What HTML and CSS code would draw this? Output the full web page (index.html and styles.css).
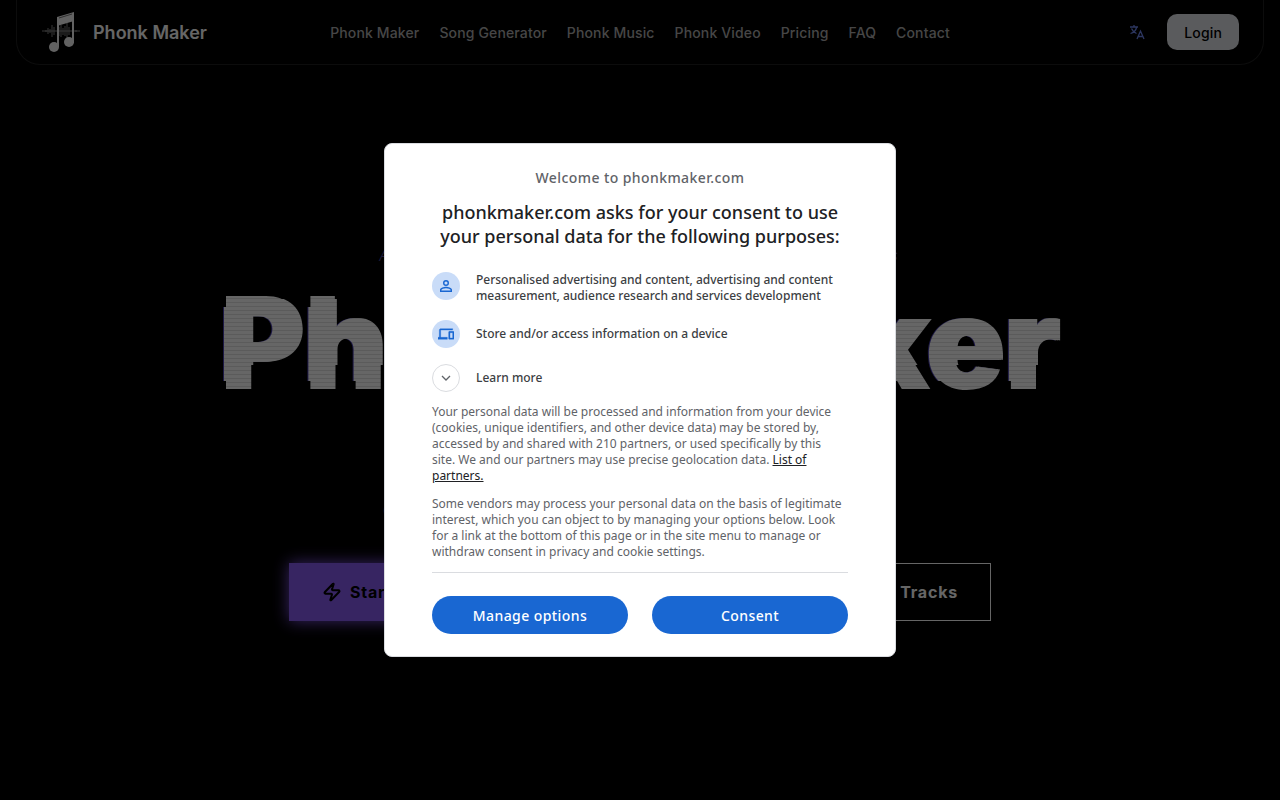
FILE: index.html
```html
<!DOCTYPE html>
<html lang="en">
<head>
  <meta charset="UTF-8" />
  <meta name="viewport" content="width=device-width, initial-scale=1" />
  <title>Phonk Maker</title>
  <link rel="stylesheet" href="styles.css">
</head>
<body>

  <header class="navbar">
    <a class="brand" href="#">
      <svg class="brand-logo" viewBox="0 0 40 44" aria-hidden="true">
        <path d="M1 21h38M5 20v2M7 18v6M9 19v4M11 15v12M13 17v8M18 17v9M20 15v12M22 18v7M24 16v10M26 13v16M28 17v8M35 20v2" stroke="#888" stroke-width="1" fill="none" />
        <path d="M17 9v28M32 4v29" stroke="#f4f4f4" stroke-width="2" fill="none" />
        <path d="M16 7 33 2v9l-17 5z" fill="#f4f4f4" />
        <path d="M18 8 31 4" stroke="#777" stroke-width="1" />
        <ellipse cx="13" cy="37" rx="5" ry="5" fill="#f4f4f4" />
        <ellipse cx="28" cy="32" rx="5" ry="5" fill="#f4f4f4" />
      </svg>
      <span>Phonk Maker</span>
    </a>
    <nav class="nav-links">
      <a href="#">Phonk Maker</a>
      <a href="#">Song Generator</a>
      <a href="#">Phonk Music</a>
      <a href="#">Phonk Video</a>
      <a href="#">Pricing</a>
      <a href="#">FAQ</a>
      <a href="#">Contact</a>
    </nav>
    <div class="nav-right">
      <button class="lang-btn" type="button" aria-label="Language">
        <svg width="16" height="16" viewBox="0 0 16 16" fill="none" stroke="currentColor" stroke-width="1.3">
          <path d="M1 3h8M5 1v2M2.500 4.500c1 2.500 3 4 5 5M7.500 3.500c-.5 2.500-2.500 5-6 6M8 15l3.500-8 3.500 8M9.500 12.500h4" />
        </svg>
      </button>
      <button class="login-btn" type="button">Login</button>
    </div>
  </header>

  <main class="hero">
    <p class="hero-tag">AI Phonk Music Generator for Free Online Studios</p>
    <h1 class="glitch" data-text="Phonk Maker">Phonk Maker</h1>
    <p class="hero-text">Create phonk music from text in seconds and share your tracks.</p>
    <div class="hero-actions">
      <button class="btn btn-primary" type="button">
        <svg width="20" height="20" viewBox="0 0 24 24" fill="none" stroke="currentColor" stroke-width="2.400" stroke-linecap="round" stroke-linejoin="round" aria-hidden="true">
          <path d="M4 14a1 1 0 0 1-.78-1.630l9.900-10.200a.5.5 0 0 1 .86.460l-1.920 6.020A1 1 0 0 0 13 10h7a1 1 0 0 1 .78 1.630l-9.900 10.200a.5.5 0 0 1-.86-.460l1.920-6.020A1 1 0 0 0 11 14z" />
        </svg>
        Start Creating Music Now
      </button>
      <button class="btn btn-outline" type="button">Explore All Tracks</button>
    </div>
  </main>

  <div class="overlay">
    <div class="consent" role="dialog" aria-modal="true" aria-labelledby="consent-title">
      <p class="consent-welcome">Welcome to phonkmaker.com</p>
      <h2 class="consent-title" id="consent-title">phonkmaker.com asks for your consent to use your personal data for the following purposes:</h2>
      <ul class="purposes">
        <li>
          <span class="purpose-icon">
            <svg width="18" height="18" viewBox="0 0 24 24" fill="#1967d2" aria-hidden="true">
              <path d="M12 5.900a2.100 2.100 0 1 1 0 4.200 2.100 2.100 0 0 1 0-4.200m0 9c2.970 0 6.100 1.460 6.100 2.100v1.100H5.900V17c0-.64 3.130-2.100 6.100-2.100M12 4a4 4 0 1 0 0 8 4 4 0 0 0 0-8m0 9c-2.670 0-8 1.340-8 4v3h16v-3c0-2.660-5.330-4-8-4" />
            </svg>
          </span>
          <span class="purpose-text">Personalised advertising and content, advertising and content measurement, audience research and services development</span>
        </li>
        <li>
          <span class="purpose-icon">
            <svg width="16" height="16" viewBox="0 0 24 24" fill="#1967d2" stroke="#1967d2" stroke-width="0.500" aria-hidden="true">
              <path d="M4 6h18V4H4c-1.100 0-2 .9-2 2v11H0v3h14v-3H4zm19 2h-6c-.55 0-1 .45-1 1v10c0 .55.45 1 1 1h6c.55 0 1-.45 1-1V9c0-.55-.45-1-1-1m-1 10h-4v-8h4z" />
            </svg>
          </span>
          <span class="purpose-text">Store and/or access information on a device</span>
        </li>
        <li class="learn-more">
          <button class="expand-btn" type="button" aria-labelledby="learn-more">
            <svg width="16" height="16" viewBox="0 0 16 16" fill="none" stroke="#5f6368" stroke-width="1.300" aria-hidden="true">
              <path d="m4 6 4 4 4-4" />
            </svg>
          </button>
          <span id="learn-more">Learn more</span>
        </li>
      </ul>
      <p class="consent-text">Your personal data will be processed and information from your device (cookies, unique identifiers, and other device data) may be stored by, accessed by and shared with 210 partners, or used specifically by this<br>site. We and our partners may use precise geolocation data. <a href="#">List of<br>partners.</a></p>
      <p class="consent-text">Some vendors may process your personal data on the basis of legitimate interest, which you can object to by managing your options below. Look for a link at the bottom of this page or in the site menu to manage or withdraw consent in privacy and cookie settings.</p>
      <div class="consent-actions">
        <button type="button">Manage options</button>
        <button type="button">Consent</button>
      </div>
    </div>
  </div>

</body>
</html>
```
FILE: styles.css
```css
* {
  box-sizing: border-box;
}
body {
  margin: 0;
  min-height: 100vh;
  background: #000;
  color: #fff;
  font-family: Inter, sans-serif;
}
p, h1, h2, ul {
  margin: 0;
  padding: 0;
}
button {
  font-family: inherit;
  cursor: pointer;
}

/* Navbar */
.navbar {
  display: grid;
  grid-template-columns: 1fr auto 1fr;
  align-items: center;
  height: 65px;
  margin: 0 16px;
  padding: 0 24px;
  border: 1px solid #1f1f1f;
  border-top: 0;
  border-radius: 0 0 24px 24px;
}
.brand {
  display: flex;
  align-items: center;
  gap: 12px;
  color: #fff;
  font-size: 18px;
  font-weight: 600;
  text-decoration: none;
}
.brand-logo {
  width: 40px;
  height: 44px;
}
.nav-links {
  display: flex;
  gap: 20px;
}
.nav-links a {
  color: #b0b0b0;
  font-size: 14px;
  font-weight: 500;
  letter-spacing: 0.01em;
  text-decoration: none;
}
.nav-right {
  display: flex;
  justify-content: flex-end;
  align-items: center;
  gap: 22px;
}
.lang-btn {
  display: flex;
  padding: 0;
  border: 0;
  background: none;
  color: #7088f0;
}
.login-btn {
  height: 36px;
  padding: 0 17px;
  border: 0;
  border-radius: 10px;
  background: #e2e4e9;
  color: #000;
  font-size: 14px;
  font-weight: 500;
  letter-spacing: 0.01em;
}

/* Hero */
.hero {
  display: flex;
  flex-direction: column;
  align-items: center;
  padding: 180px 16px 0;
  text-align: center;
}
.hero-tag {
  color: #4b4599;
  font-size: 16px;
  font-style: italic;
  font-weight: 300;
  line-height: 20px;
  letter-spacing: 0.2em;
}
.glitch {
  position: relative;
  margin-top: 14px;
  font-size: 128px;
  font-weight: 900;
  line-height: 128px;
  color: transparent;
  background: repeating-linear-gradient(#fff 0 3px, #e4e4e4 3px 4px);
  background-clip: text;
}
.glitch::before,
.glitch::after {
  content: attr(data-text);
  position: absolute;
  inset: 0;
  background: inherit;
  background-clip: text;
}
.glitch::before {
  left: -2px;
  right: 2px;
  clip-path: inset(28px 0 26px -4px);
  filter: drop-shadow(-1px 0 #4a3fb0);
}
.glitch::after {
  left: 2px;
  right: -2px;
  clip-path: inset(20px -4px 42px 0);
}
.hero-text {
  margin-top: 92px;
  color: #b0b0b0;
  font-size: 17px;
  line-height: 24px;
}
.hero-actions {
  display: flex;
  gap: 24px;
  width: 100%;
  max-width: 702px;
  margin-top: 40px;
}
.btn {
  display: flex;
  flex: 1;
  align-items: center;
  gap: 8px;
  height: 58px;
  padding: 0 32px;
  border: 1px solid #fff;
  font-size: 16px;
  font-weight: 700;
  letter-spacing: 0.05em;
}
.btn-primary {
  border-color: #8b5cf6;
  background: #8b5cf6;
  color: #000;
  box-shadow: 0 0 15px #8b5cf6;
}
.btn-outline {
  justify-content: flex-end;
  background: #000;
  color: #fff;
}

/* Consent dialog */
.overlay {
  position: fixed;
  inset: 0;
  display: grid;
  place-items: center;
  background: rgba(0, 0, 0, 0.6);
}
.consent {
  width: 100%;
  max-width: 512px;
  padding: 24px 47px 22px;
  border: 1px solid #dadce0;
  border-radius: 8px;
  background: #fff;
  color: #3c4043;
  font-family: "Noto Sans", "Open Sans", sans-serif;
}
.consent-welcome {
  color: #5f6368;
  font-size: 14px;
  font-weight: 500;
  line-height: 20px;
  letter-spacing: 0.03em;
  text-align: center;
}
.consent-title {
  margin-top: 12px;
  color: #202124;
  font-size: 18px;
  font-weight: 500;
  line-height: 24px;
  text-align: center;
}
.purposes {
  display: flex;
  flex-direction: column;
  gap: 16px;
  margin-top: 24px;
  list-style: none;
  font-size: 12px;
  font-weight: 500;
  line-height: 16px;
}
.purposes li {
  display: flex;
  gap: 16px;
}
.purpose-icon,
.expand-btn {
  display: flex;
  flex: none;
  align-items: center;
  justify-content: center;
  width: 28px;
  height: 28px;
  padding: 0;
  border: 0;
  border-radius: 50%;
  background: #c9dcf8;
}
.purpose-text {
  align-self: center;
}
.expand-btn {
  border: 1px solid #dadce0;
  background: #fff;
}
.purposes .learn-more {
  align-items: center;
}
.consent-text {
  margin-top: 12px;
  color: #5f6368;
  font-size: 12px;
  line-height: 16px;
}
.consent-text a {
  color: #202124;
}
.consent-actions {
  display: flex;
  gap: 24px;
  margin-top: 12px;
  padding-top: 23px;
  border-top: 1px solid #dadce0;
}
.consent-actions button {
  flex: 1;
  height: 38px;
  border: 0;
  border-radius: 19px;
  background: #1967d2;
  color: #fff;
  font-size: 14px;
  font-weight: 500;
  letter-spacing: 0.03em;
}
```
